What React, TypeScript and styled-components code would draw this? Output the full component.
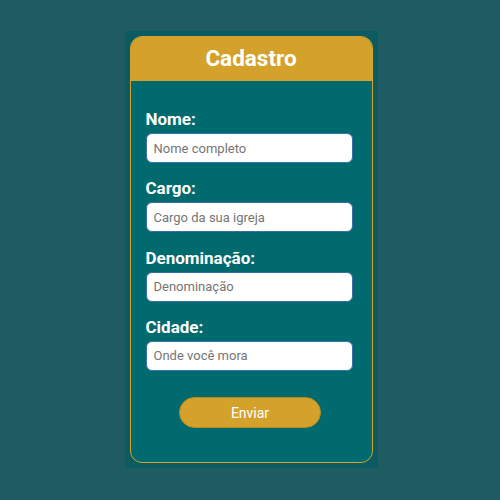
import React from "react";
import styled, { createGlobalStyle } from "styled-components";

const Global = createGlobalStyle`
  html, body { margin: 0; padding: 0; background: #1e5c62; }
  body { font-family: Roboto, "Noto Sans", sans-serif; }
  * { box-sizing: border-box; }
`;

const Page = styled.div`
  display: flex;
  justify-content: center;
  padding-top: 31px;
  padding-left: 2px;
`;

const Frame = styled.div`
  background: #0d5b62;
  padding: 5px;
`;

const Card = styled.form`
  width: 243px;
  height: 427px;
  background: #006a6e;
  border: 1px solid #d4a22a;
  border-radius: 12px;
  overflow: hidden;
  display: flex;
  flex-direction: column;
`;

const Header = styled.h1`
  margin: 0;
  height: 44px;
  padding-bottom: 3px;
  background: #d4a22a;
  color: #ffffff;
  font-size: 22.5px;
  font-weight: 700;
  display: flex;
  align-items: center;
  justify-content: center;
`;

const Body = styled.div`
  padding: 29px 0 0 15px;
  display: flex;
  flex-direction: column;
`;

const Field = styled.div`
  display: flex;
  flex-direction: column;
  gap: 5px;
  margin-bottom: 16.33px;
`;

const Label = styled.label`
  color: #ffffff;
  font-size: 17px;
  font-weight: 700;
  line-height: 18px;
`;

const Input = styled.input`
  width: 207px;
  height: 30px;
  border: 1px solid #3a6fa8;
  border-radius: 6px;
  background: #ffffff;
  padding: 0 7px;
  font-family: Roboto, sans-serif;
  font-size: 13px;
  color: #333;
  outline: none;
  &::placeholder { color: #757575; }
`;

const Actions = styled.div`
  display: flex;
  justify-content: center;
  padding-top: 10px;
  padding-right: 17px;
`;

const Button = styled.button`
  width: 142px;
  height: 31px;
  border: 1px solid #b88a1e;
  border-radius: 16px;
  background: #d4a22a;
  color: #ffffff;
  font-family: Roboto, sans-serif;
  font-size: 14px;
  cursor: pointer;
`;

const fields = [
  { label: "Nome:", placeholder: "Nome completo" },
  { label: "Cargo:", placeholder: "Cargo da sua igreja" },
  { label: "Denominação:", placeholder: "Denominação" },
  { label: "Cidade:", placeholder: "Onde você mora" },
];

export default function App() {
  return (
    <>
      <Global />
      <Page>
        <Frame>
          <Card onSubmit={(e) => e.preventDefault()}>
            <Header>Cadastro</Header>
            <Body>
              {fields.map((f) => (
                <Field key={f.label}>
                  <Label>{f.label}</Label>
                  <Input placeholder={f.placeholder} />
                </Field>
              ))}
              <Actions>
                <Button type="submit">Enviar</Button>
              </Actions>
            </Body>
          </Card>
        </Frame>
      </Page>
    </>
  );
}
